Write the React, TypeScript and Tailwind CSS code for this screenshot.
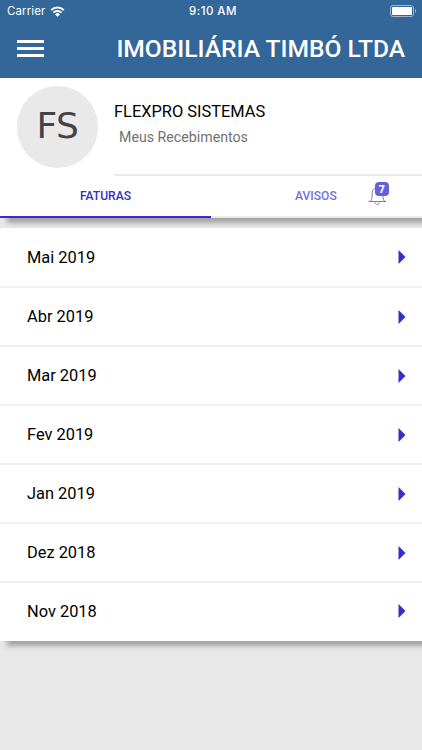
import React from "react";

const months = [
  "Mai 2019",
  "Abr 2019",
  "Mar 2019",
  "Fev 2019",
  "Jan 2019",
  "Dez 2018",
  "Nov 2018",
];

function StatusBar() {
  return (
    <div className="grid h-[22px] grid-cols-3 items-center pl-[7px] pr-[5px] font-['Inter',sans-serif] text-[11.5px] leading-none">
      <span className="flex items-center gap-[5px] pt-px">
        <span className="tracking-[0.1px]">Carrier</span>
        <svg width="15" height="11" viewBox="0 0 14 11" fill="none" stroke="white">
          <path d="M0.7 4.1a9 9 0 0 1 12.6 0" strokeWidth="2" />
          <path d="M2.9 6.6a5.8 5.8 0 0 1 8.2 0" strokeWidth="2" />
          <path d="M7 10.8L4.5 8.4a3.5 3.5 0 0 1 5 0z" fill="white" stroke="none" />
        </svg>
      </span>
      <span className="pl-[2px] pt-px text-center font-medium tracking-[0.45px]">9:10 AM</span>
      <svg className="justify-self-end" width="27" height="12" viewBox="0 0 27 12">
        <rect x="0.5" y="0.5" width="23" height="11" rx="2.5" fill="none" stroke="#9db5cf" />
        <rect x="2" y="2" width="20" height="8" rx="1" fill="white" />
        <path d="M25 4c1.6.6 1.6 3.4 0 4z" fill="#9db5cf" />
      </svg>
    </div>
  );
}

function Header() {
  return (
    <header className="h-[77.5px] bg-[#336699] text-white">
      <StatusBar />
      <div className="flex h-[53px] items-center justify-between pl-[17px] pr-[17px]">
        <button aria-label="Menu" className="flex flex-col gap-[4px]">
          <span className="h-[3px] w-[27px] bg-white"></span>
          <span className="h-[3px] w-[27px] bg-white"></span>
          <span className="h-[3px] w-[27px] bg-white"></span>
        </button>
        <h1 className="whitespace-nowrap pt-[2px] text-[24.6px] font-medium leading-none">
          IMOBILIÁRIA TIMBÓ LTDA
        </h1>
      </div>
    </header>
  );
}

function Profile() {
  return (
    <div className="flex h-[98px] pl-[17px]">
      <div className="mt-[8px] flex h-[82px] w-[81px] shrink-0 items-center justify-center rounded-full bg-[#e9e9e9] pb-[2px] font-['DejaVu_Sans',sans-serif] text-[36px] tracking-[-0.5px] text-[#444]">
        FS
      </div>
      <div className="ml-4 flex-1 border-b-2 border-[#e9e9e9] pt-[24px]">
        <p className="text-[16.4px] leading-[20px] text-black">FLEXPRO SISTEMAS</p>
        <p className="ml-[5px] mt-[6px] text-[14.2px] leading-[18px] text-[#717171]">
          Meus Recebimentos
        </p>
      </div>
    </div>
  );
}

function Bell() {
  return (
    <span className="relative mb-[4px] ml-[31px] h-6 w-6">
      <svg width="20" height="24" viewBox="0 0 20 24" fill="none" stroke="#7772dc">
        <path d="M0.5 19.5h17.5M2.5 19.2C4.3 17 4 14.5 4.2 11.5C4.4 8 6 5.5 9.5 5.5s5.2 2.5 5.3 6C15 14.5 14.7 17 16.5 19.2" />
        <path d="M7 20.5c.3 2.7 4 2.7 4.3 0" />
      </svg>
      <span className="absolute left-[7px] top-0 flex h-[14px] w-[14px] items-center justify-center rounded-[4px] bg-[#6660d8] font-['Noto_Sans',sans-serif] text-[10.5px] font-bold leading-none text-white">
        7
      </span>
    </span>
  );
}

function Tabs() {
  return (
    <nav className="flex h-[42.5px] text-[12.1px] font-medium">
      <div className="flex w-1/2 items-center justify-center border-b-2 border-[#3430c5] text-[#3430c5]">
        FATURAS
      </div>
      <div className="flex w-1/2 items-center border-b-2 border-[#e9e9e9] pl-[84px] text-[#7470dc]">
        AVISOS
        <Bell />
      </div>
    </nav>
  );
}

export default function App() {
  return (
    <main className="h-[750px] w-[422px] overflow-hidden bg-[#e8e8e8] font-['Roboto',sans-serif]">
      <Header />
      <section className="relative bg-white shadow-[7px_5px_5px_rgba(0,0,0,0.3)]">
        <Profile />
        <Tabs />
      </section>
      <ul className="relative mt-[10px] bg-white pb-[2px] shadow-[7px_5px_5px_rgba(0,0,0,0.3)]">
        {months.map((month) => (
          <li
            key={month}
            className="flex h-[59px] items-center justify-between border-t-2 border-[#f1f1f1] pl-[27px] pr-[16px] text-[16.4px] text-black first:h-[58px] first:border-0 last:h-[58px]"
          >
            <span className="pt-[2px]">{month}</span>
            <svg width="8" height="14" viewBox="0 0 8 14" fill="#3430c5">
              <path d="M0.5 0L7.5 7L0.5 14z" />
            </svg>
          </li>
        ))}
      </ul>
    </main>
  );
}
